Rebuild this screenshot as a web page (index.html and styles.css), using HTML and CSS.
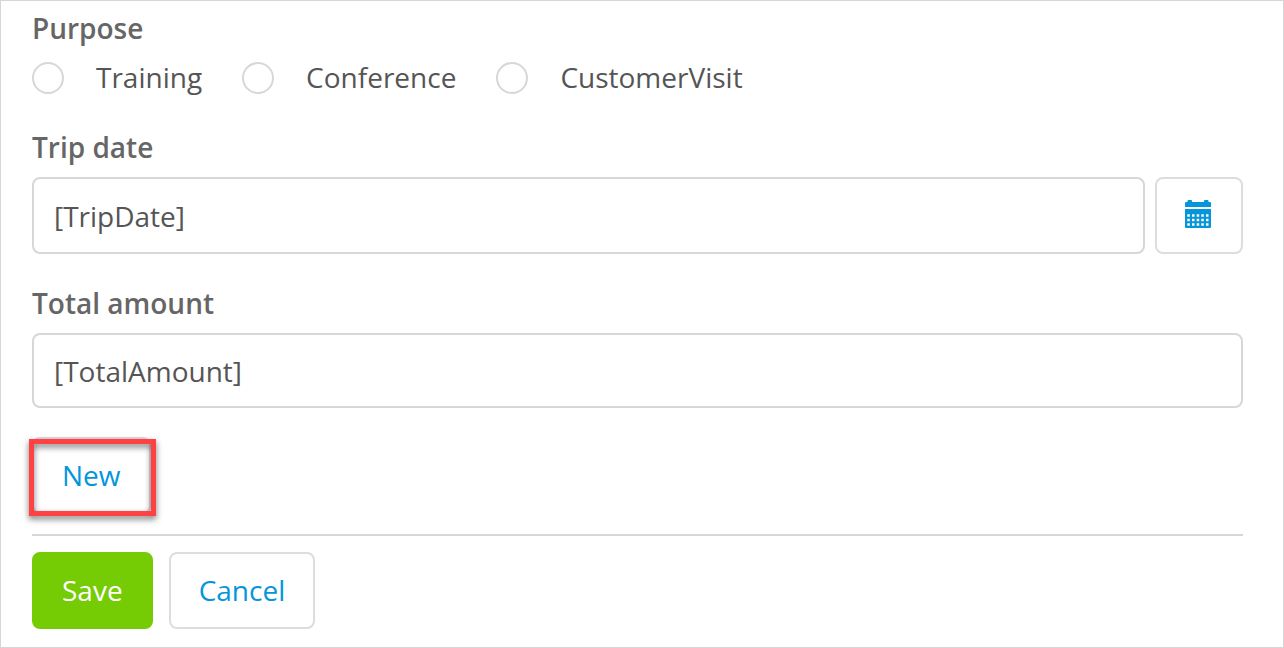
FILE: index.html
```html
<!DOCTYPE html>
<html lang="en">
<head>
<meta charset="utf-8">
<title>Trip expense</title>
<link rel="stylesheet" href="styles.css">
</head>
<body>
<form class="form">
  <fieldset class="group purpose">
    <legend class="label">Purpose</legend>
    <div class="options">
      <label class="option"><input class="radio" type="radio" name="purpose" value="training">Training</label>
      <label class="option"><input class="radio" type="radio" name="purpose" value="conference">Conference</label>
      <label class="option"><input class="radio" type="radio" name="purpose" value="customer">CustomerVisit</label>
    </div>
  </fieldset>
  <div class="group">
    <label class="label" for="trip-date">Trip date</label>
    <div class="field-row">
      <input class="field date-field" id="trip-date" type="text" value="[TripDate]">
      <button class="button icon-button" type="button" aria-label="Choose date">
        <svg class="calendar" viewBox="0 0 26 28" aria-hidden="true">
          <path fill="currentColor" d="M0 3q0-1 1-1h1.500V1q0-1 1-1h2.500q1 0 1 1v1h12V1q0-1 1-1h2.500q1 0 1 1v1H25q1 0 1 1v4H0z"/>
          <path fill="currentColor" fill-rule="evenodd" d="M0 9h26v18q0 1-1 1H1q-1 0-1-1zM2.300 14.200v2.500h2.500v-2.500zM7 14.200v2.500h2.500v-2.500zM11.700 14.200v2.500h2.500v-2.500zM16.300 14.200v2.500h2.500v-2.500zM21 14.200v2.500h2.500v-2.500zM2.300 18.700v2.500h2.500v-2.500zM7 18.700v2.500h2.500v-2.500zM11.700 18.700v2.500h2.500v-2.500zM16.300 18.700v2.500h2.500v-2.500zM21 18.700v2.500h2.500v-2.500zM2.300 23.300v2.500h2.500v-2.500zM7 23.300v2.500h2.500v-2.500zM11.700 23.300v2.500h2.500v-2.500zM16.300 23.300v2.500h2.500v-2.500zM21 23.300v2.500h2.500v-2.500z"/>
        </svg>
      </button>
    </div>
  </div>
  <div class="group">
    <label class="label" for="total-amount">Total amount</label>
    <input class="field" id="total-amount" type="text" value="[TotalAmount]">
  </div>
  <div class="new-row"><button class="button highlighted" type="button">New</button></div>
  <div class="actions">
    <button class="button primary" type="submit">Save</button>
    <button class="button" type="button">Cancel</button>
  </div>
</form>
</body>
</html>
```

FILE: styles.css
```css
* {
  box-sizing: border-box;
}

body {
  margin: 0;
  background: #fff;
  color: #555;
  font: 28px/36px "Open Sans", sans-serif;
}

.form {
  min-height: 100vh;
  padding: 9px 40px 18px 31px;
  border: 1px solid #d7d7d7;
}

.group {
  margin: 0 0 31px;
  padding: 0;
  border: 0;
}

.purpose {
  margin-bottom: 34px;
}

.label {
  display: block;
  margin-bottom: 12px;
  padding: 0;
  color: #666;
  font-weight: 600;
}

.options {
  display: flex;
  flex-wrap: wrap;
  gap: 40px;
  padding-top: 1px;
}

.option {
  display: flex;
  align-items: center;
  gap: 32px;
}

.radio {
  appearance: none;
  width: 32px;
  height: 32px;
  margin: 2px 0 0;
  border: 2px solid #d7d7d7;
  border-radius: 50%;
}

.radio:checked {
  border: 10px solid #0595db;
}

.field-row {
  display: flex;
  gap: 10px;
}

.field {
  display: block;
  flex: 1;
  width: 100%;
  min-width: 0;
  height: 75px;
  padding: 0 20px;
  border: 2px solid #d7d7d7;
  border-radius: 8px;
  background: #fff;
  color: #555;
  font: inherit;
}

.date-field {
  height: 77px;
}

.button {
  position: relative;
  height: 77px;
  padding: 0 28px 2px;
  border: 2px solid #ddd;
  border-radius: 8px;
  background: #fff;
  color: #0595db;
  font: inherit;
}

.icon-button {
  display: flex;
  align-items: center;
  justify-content: center;
  width: 88px;
  padding: 0 2px 3px 0;
}

.calendar {
  width: 26px;
  height: 28px;
}

.new-row {
  margin-top: -2px;
  padding-bottom: 20px;
  border-bottom: 2px solid #d7d7d7;
}

.new-row .button {
  display: block;
}

.highlighted::after {
  content: "";
  position: absolute;
  inset: 0 -7px -4px -5px;
  border: 5px solid #ff4143;
  filter: drop-shadow(0 3px 3px rgb(0 0 0 / 55%));
}

.actions {
  display: flex;
  gap: 16px;
  padding-top: 16px;
}

.primary {
  border-color: #76cc04;
  background: #76cc04;
  color: #fff;
}
```
